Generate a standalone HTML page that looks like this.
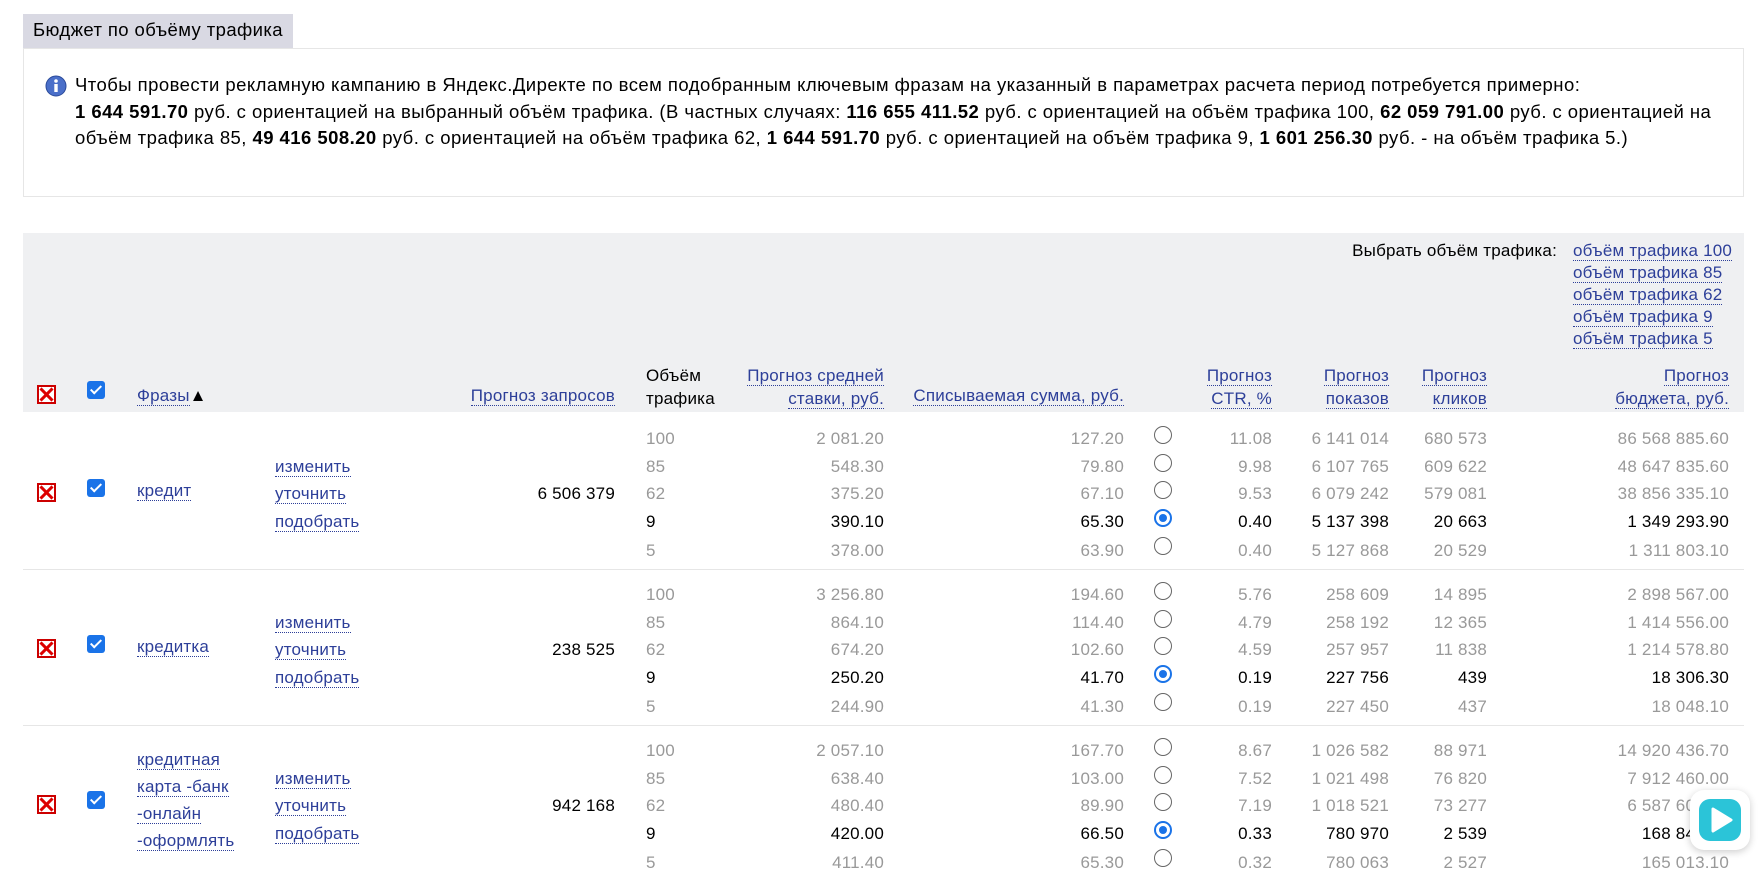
<!DOCTYPE html>
<html><head><meta charset="utf-8">
<style>
*{margin:0;padding:0;box-sizing:border-box}
body{width:1764px;height:871px;overflow:hidden;background:#fff;font-family:"Liberation Sans",sans-serif;font-size:17px;color:#000;position:relative;letter-spacing:0.2px}
.a{position:absolute;line-height:20px;white-space:nowrap}
.l{color:#2d3f99;border-bottom:1px dotted #2d3f99;line-height:18px}
.g{color:#999}
.r{text-align:right}
.tab{position:absolute;left:23px;top:14px;width:270px;height:34px;background:#d9d9e3;padding:5px 10px;font-size:18.5px;letter-spacing:0.4px}
.box{position:absolute;left:23px;top:48px;width:1721px;height:149px;border:1px solid #e6e6e6}
.info{position:absolute;left:75px;top:72px;width:1660px;line-height:26.5px;font-size:18.5px;letter-spacing:0.45px}
.hdr{position:absolute;left:23px;top:233px;width:1721px;height:179px;background:#eff0f2}
.sep{position:absolute;left:23px;width:1721px;height:1px;background:#e6e6e6}
.x{position:absolute;left:37px;width:19px;height:19px;border:2px solid #c00;background:#fff}
.x:before,.x:after{content:"";position:absolute;left:6px;top:-1px;width:3px;height:17px;background:#d00;transform:rotate(45deg)}
.x:after{transform:rotate(-45deg)}
.cb{position:absolute;left:87px;width:18px;height:18px;border-radius:3px;background:#1a73e8}
.cb:after{content:"";position:absolute;left:6px;top:2px;width:4px;height:9px;border:solid #fff;border-width:0 2.5px 2.5px 0;transform:rotate(45deg)}
.rd{position:absolute;left:1154px;width:18px;height:18px;border-radius:50%;border:1.5px solid #666;background:#fff}
.rd.on{border:2px solid #1a73e8}
.rd.on:after{content:"";position:absolute;left:3px;top:3px;width:8px;height:8px;border-radius:50%;background:#1a73e8}
</style></head><body>
<div class="tab">Бюджет по объёму трафика</div>
<div class="box"></div>
<svg style="position:absolute;left:45px;top:75px" width="22" height="22" viewBox="0 0 22 22"><circle cx="11" cy="11" r="10" fill="#4a6fc9" stroke="#2a4a9a"/><circle cx="11" cy="6" r="1.8" fill="#fff"/><rect x="9.3" y="9" width="3.4" height="8" fill="#fff"/></svg>
<div class="info">Чтобы провести рекламную кампанию в Яндекс.Директе по всем подобранным ключевым фразам на указанный в параметрах расчета период потребуется примерно:<br><b>1 644 591.70</b> руб. с ориентацией на выбранный объём трафика. (В частных случаях: <b>116 655 411.52</b> руб. с ориентацией на объём трафика 100, <b>62 059 791.00</b> руб. с ориентацией на объём трафика 85, <b>49 416 508.20</b> руб. с ориентацией на объём трафика 62, <b>1 644 591.70</b> руб. с ориентацией на объём трафика 9, <b>1 601 256.30</b> руб. - на объём трафика 5.)</div>

<div class="hdr"></div>
<div class="a" style="right:207px;top:241px">Выбрать объём трафика:</div>
<div class="a" style="left:1573px;top:241px"><span class="l">объём трафика 100</span></div>
<div class="a" style="left:1573px;top:263px"><span class="l">объём трафика 85</span></div>
<div class="a" style="left:1573px;top:285px"><span class="l">объём трафика 62</span></div>
<div class="a" style="left:1573px;top:307px"><span class="l">объём трафика 9</span></div>
<div class="a" style="left:1573px;top:329px"><span class="l">объём трафика 5</span></div>
<div class="x" style="top:385px"></div><div class="cb" style="top:381px"></div>
<div class="a" style="left:137px;top:386px"><span class="l">Фразы</span>▲</div>
<div class="a" style="right:1149px;top:386px"><span class="l">Прогноз запросов</span></div>
<div class="a" style="left:646px;top:364px;line-height:23px">Объём<br>трафика</div>
<div class="a r" style="right:880px;top:364px;line-height:23px"><span class="l">Прогноз средней</span><br><span class="l">ставки, руб.</span></div>
<div class="a" style="right:640px;top:386px"><span class="l">Списываемая сумма, руб.</span></div>
<div class="a r" style="right:492px;top:364px;line-height:23px"><span class="l">Прогноз</span><br><span class="l">CTR, %</span></div>
<div class="a r" style="right:375px;top:364px;line-height:23px"><span class="l">Прогноз</span><br><span class="l">показов</span></div>
<div class="a r" style="right:277px;top:364px;line-height:23px"><span class="l">Прогноз</span><br><span class="l">кликов</span></div>
<div class="a r" style="right:35px;top:364px;line-height:23px"><span class="l">Прогноз</span><br><span class="l">бюджета, руб.</span></div>

<!-- row 1 -->
<div class="x" style="top:483px"></div><div class="cb" style="top:479px"></div>
<div class="a" style="left:137px;top:481px"><span class="l">кредит</span></div>
<div class="a" style="left:275px;top:457px"><span class="l">изменить</span></div>
<div class="a" style="left:275px;top:484px"><span class="l">уточнить</span></div>
<div class="a" style="left:275px;top:512px"><span class="l">подобрать</span></div>
<div class="a" style="right:1149px;top:484px">6 506 379</div>
<div class="a g" style="left:646px;top:429px">100</div><div class="a g" style="right:880px;top:429px">2 081.20</div><div class="a g" style="right:640px;top:429px">127.20</div><div class="rd" style="top:426px"></div><div class="a g" style="right:492px;top:429px">11.08</div><div class="a g" style="right:375px;top:429px">6 141 014</div><div class="a g" style="right:277px;top:429px">680 573</div><div class="a g" style="right:35px;top:429px">86 568 885.60</div>
<div class="a g" style="left:646px;top:457px">85</div><div class="a g" style="right:880px;top:457px">548.30</div><div class="a g" style="right:640px;top:457px">79.80</div><div class="rd" style="top:454px"></div><div class="a g" style="right:492px;top:457px">9.98</div><div class="a g" style="right:375px;top:457px">6 107 765</div><div class="a g" style="right:277px;top:457px">609 622</div><div class="a g" style="right:35px;top:457px">48 647 835.60</div>
<div class="a g" style="left:646px;top:484px">62</div><div class="a g" style="right:880px;top:484px">375.20</div><div class="a g" style="right:640px;top:484px">67.10</div><div class="rd" style="top:481px"></div><div class="a g" style="right:492px;top:484px">9.53</div><div class="a g" style="right:375px;top:484px">6 079 242</div><div class="a g" style="right:277px;top:484px">579 081</div><div class="a g" style="right:35px;top:484px">38 856 335.10</div>
<div class="a" style="left:646px;top:512px">9</div><div class="a" style="right:880px;top:512px">390.10</div><div class="a" style="right:640px;top:512px">65.30</div><div class="rd on" style="top:509px"></div><div class="a" style="right:492px;top:512px">0.40</div><div class="a" style="right:375px;top:512px">5 137 398</div><div class="a" style="right:277px;top:512px">20 663</div><div class="a" style="right:35px;top:512px">1 349 293.90</div>
<div class="a g" style="left:646px;top:541px">5</div><div class="a g" style="right:880px;top:541px">378.00</div><div class="a g" style="right:640px;top:541px">63.90</div><div class="rd" style="top:537px"></div><div class="a g" style="right:492px;top:541px">0.40</div><div class="a g" style="right:375px;top:541px">5 127 868</div><div class="a g" style="right:277px;top:541px">20 529</div><div class="a g" style="right:35px;top:541px">1 311 803.10</div>
<div class="sep" style="top:569px"></div>

<!-- row 2 -->
<div class="x" style="top:639px"></div><div class="cb" style="top:635px"></div>
<div class="a" style="left:137px;top:637px"><span class="l">кредитка</span></div>
<div class="a" style="left:275px;top:613px"><span class="l">изменить</span></div>
<div class="a" style="left:275px;top:640px"><span class="l">уточнить</span></div>
<div class="a" style="left:275px;top:668px"><span class="l">подобрать</span></div>
<div class="a" style="right:1149px;top:640px">238 525</div>
<div class="a g" style="left:646px;top:585px">100</div><div class="a g" style="right:880px;top:585px">3 256.80</div><div class="a g" style="right:640px;top:585px">194.60</div><div class="rd" style="top:582px"></div><div class="a g" style="right:492px;top:585px">5.76</div><div class="a g" style="right:375px;top:585px">258 609</div><div class="a g" style="right:277px;top:585px">14 895</div><div class="a g" style="right:35px;top:585px">2 898 567.00</div>
<div class="a g" style="left:646px;top:613px">85</div><div class="a g" style="right:880px;top:613px">864.10</div><div class="a g" style="right:640px;top:613px">114.40</div><div class="rd" style="top:610px"></div><div class="a g" style="right:492px;top:613px">4.79</div><div class="a g" style="right:375px;top:613px">258 192</div><div class="a g" style="right:277px;top:613px">12 365</div><div class="a g" style="right:35px;top:613px">1 414 556.00</div>
<div class="a g" style="left:646px;top:640px">62</div><div class="a g" style="right:880px;top:640px">674.20</div><div class="a g" style="right:640px;top:640px">102.60</div><div class="rd" style="top:637px"></div><div class="a g" style="right:492px;top:640px">4.59</div><div class="a g" style="right:375px;top:640px">257 957</div><div class="a g" style="right:277px;top:640px">11 838</div><div class="a g" style="right:35px;top:640px">1 214 578.80</div>
<div class="a" style="left:646px;top:668px">9</div><div class="a" style="right:880px;top:668px">250.20</div><div class="a" style="right:640px;top:668px">41.70</div><div class="rd on" style="top:665px"></div><div class="a" style="right:492px;top:668px">0.19</div><div class="a" style="right:375px;top:668px">227 756</div><div class="a" style="right:277px;top:668px">439</div><div class="a" style="right:35px;top:668px">18 306.30</div>
<div class="a g" style="left:646px;top:697px">5</div><div class="a g" style="right:880px;top:697px">244.90</div><div class="a g" style="right:640px;top:697px">41.30</div><div class="rd" style="top:693px"></div><div class="a g" style="right:492px;top:697px">0.19</div><div class="a g" style="right:375px;top:697px">227 450</div><div class="a g" style="right:277px;top:697px">437</div><div class="a g" style="right:35px;top:697px">18 048.10</div>
<div class="sep" style="top:725px"></div>

<!-- row 3 -->
<div class="x" style="top:795px"></div><div class="cb" style="top:791px"></div>
<div class="a" style="left:137px;top:746px;line-height:27px"><span class="l">кредитная</span><br><span class="l">карта -банк</span><br><span class="l">-онлайн</span><br><span class="l">-оформлять</span></div>
<div class="a" style="left:275px;top:769px"><span class="l">изменить</span></div>
<div class="a" style="left:275px;top:796px"><span class="l">уточнить</span></div>
<div class="a" style="left:275px;top:824px"><span class="l">подобрать</span></div>
<div class="a" style="right:1149px;top:796px">942 168</div>
<div class="a g" style="left:646px;top:741px">100</div><div class="a g" style="right:880px;top:741px">2 057.10</div><div class="a g" style="right:640px;top:741px">167.70</div><div class="rd" style="top:738px"></div><div class="a g" style="right:492px;top:741px">8.67</div><div class="a g" style="right:375px;top:741px">1 026 582</div><div class="a g" style="right:277px;top:741px">88 971</div><div class="a g" style="right:35px;top:741px">14 920 436.70</div>
<div class="a g" style="left:646px;top:769px">85</div><div class="a g" style="right:880px;top:769px">638.40</div><div class="a g" style="right:640px;top:769px">103.00</div><div class="rd" style="top:766px"></div><div class="a g" style="right:492px;top:769px">7.52</div><div class="a g" style="right:375px;top:769px">1 021 498</div><div class="a g" style="right:277px;top:769px">76 820</div><div class="a g" style="right:35px;top:769px">7 912 460.00</div>
<div class="a g" style="left:646px;top:796px">62</div><div class="a g" style="right:880px;top:796px">480.40</div><div class="a g" style="right:640px;top:796px">89.90</div><div class="rd" style="top:793px"></div><div class="a g" style="right:492px;top:796px">7.19</div><div class="a g" style="right:375px;top:796px">1 018 521</div><div class="a g" style="right:277px;top:796px">73 277</div><div class="a g" style="right:35px;top:796px">6 587 600.00</div>
<div class="a" style="left:646px;top:824px">9</div><div class="a" style="right:880px;top:824px">420.00</div><div class="a" style="right:640px;top:824px">66.50</div><div class="rd on" style="top:821px"></div><div class="a" style="right:492px;top:824px">0.33</div><div class="a" style="right:375px;top:824px">780 970</div><div class="a" style="right:277px;top:824px">2 539</div><div class="a" style="right:35px;top:824px">168 842.00</div>
<div class="a g" style="left:646px;top:853px">5</div><div class="a g" style="right:880px;top:853px">411.40</div><div class="a g" style="right:640px;top:853px">65.30</div><div class="rd" style="top:849px"></div><div class="a g" style="right:492px;top:853px">0.32</div><div class="a g" style="right:375px;top:853px">780 063</div><div class="a g" style="right:277px;top:853px">2 527</div><div class="a g" style="right:35px;top:853px">165 013.10</div>

<div style="position:absolute;left:1690px;top:790px;width:60px;height:60px;border-radius:14px;background:#fff;box-shadow:0 2px 8px rgba(0,0,0,.2)"></div>
<svg style="position:absolute;left:1697px;top:797px" width="46" height="46" viewBox="0 0 46 46"><rect x="2" y="2" width="42" height="42" rx="11" fill="#2bc4d8"/><path d="M16 12 L34 23 L16 34 Z" fill="#fff" stroke="#fff" stroke-width="3" stroke-linejoin="round"/></svg>
</body></html>
